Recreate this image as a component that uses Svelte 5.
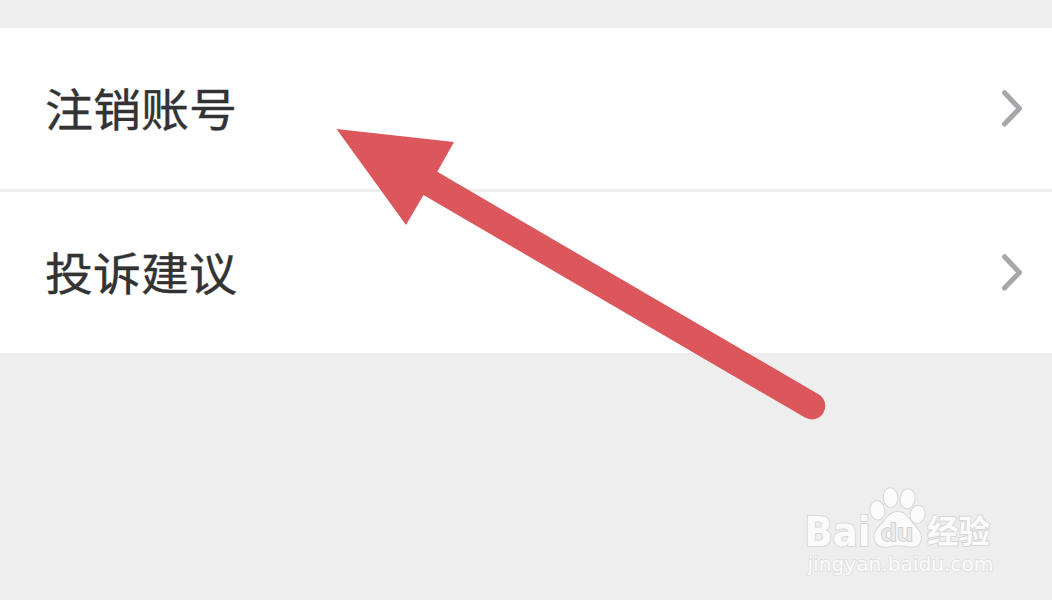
<script>
  const items = [
    { id: 'cancel', label: '注销账号' },
    { id: 'feedback', label: '投诉建议' }
  ];

  // x, y, rx, ry, rotation
  const toes = [
    [77.4, 30.3, 6.9, 9.2, -8],
    [90.5, 17.6, 6.9, 9.4, -4],
    [107.6, 18.8, 7, 9.5, 8],
    [117.6, 34.4, 6.9, 8.8, 10]
  ];
</script>

<main class="page">
  <ul class="menu">
    {#each items as item (item.id)}
      <li class="row">
        <span class="label">{item.label}</span>
        <svg class="chevron" width="24" height="42" viewBox="0 0 24 42">
          <path d="M4.500 4.700 L19.500 20.500 L4.500 36" />
        </svg>
      </li>
    {/each}
  </ul>

  <svg class="arrow" width="500" height="300" viewBox="330 125 500 300">
    <path d="M336.500 129 L454 142 L437.300 171.800 L818.500 394.200 A13.500 13.500 0 0 1 805 417.600 L423.500 195 L406 225 Z" />
  </svg>

  <svg class="mark" width="200" height="105" viewBox="0 0 200 105">
    <g class="shape">
      <text class="brand" x="4.500" y="65.500" textLength="66" lengthAdjust="spacingAndGlyphs">Bai</text>
      {#each toes as [x, y, rx, ry, r]}
        <ellipse cx={x} cy={y} {rx} {ry} transform="rotate({r} {x} {y})" />
      {/each}
      <path d="M97.500 32 C90 32 87 38 83 43 C78 48 73 52 75 60 C77 67 84 67.500 91 66 C96 65 101 65 106 66 C114 68 120 66 121 59 C122 52 116 48 112 43 C108 37 105 32 97.500 32 Z" />
      <text class="zh" x="127" y="62.500" textLength="63" lengthAdjust="spacingAndGlyphs">经验</text>
    </g>
    <text class="du" x="81" y="60.500" textLength="32" lengthAdjust="spacingAndGlyphs">du</text>
    <text class="url" x="7.500" y="90.500" textLength="186" lengthAdjust="spacingAndGlyphs">jingyan.baidu.com</text>
  </svg>
</main>

<style>
  :global(body) { background: #eee; }

  .page {
    position: relative;
    box-sizing: border-box;
    height: 600px;
    padding-top: 28px;
    overflow: hidden;
    background: #eee;
    font-family: "Noto Sans CJK SC", sans-serif;
  }

  .menu { margin: 0; padding: 0; list-style: none; background: #fff; }
  .row {
    display: flex;
    align-items: center;
    justify-content: space-between;
    height: 161px;
    padding: 0 28px 0 45px;
  }
  .row + .row { border-top: 3px solid #eee; }
  .label {
    color: #333;
    font-size: 48px;
    line-height: 70px;
    -webkit-text-stroke: 0.4px #333;
    transform: translateY(-2px) scaleY(0.94);
  }
  .chevron { fill: none; stroke: #a6a6ab; stroke-width: 5; stroke-linecap: round; stroke-linejoin: round; }

  .arrow { position: absolute; left: 330px; top: 125px; fill: #db575c; }

  .mark { position: absolute; left: 800px; top: 480px; }
  .shape { fill: #fbfbfb; stroke: #d8d8d8; stroke-width: 2; paint-order: stroke; }
  .brand { font: bold 41px "DejaVu Sans", sans-serif; }
  .zh { font: bold 32px "Noto Sans CJK SC", sans-serif; }
  .du { font: bold 24px "Liberation Sans", sans-serif; fill: #eaeaea; stroke: #cacaca; stroke-width: 1.5; paint-order: stroke; }
  .url { font: 20px "DejaVu Sans", sans-serif; fill: #fbfbfb; stroke: #dfdfdf; stroke-width: 1.6; paint-order: stroke; }
</style>
